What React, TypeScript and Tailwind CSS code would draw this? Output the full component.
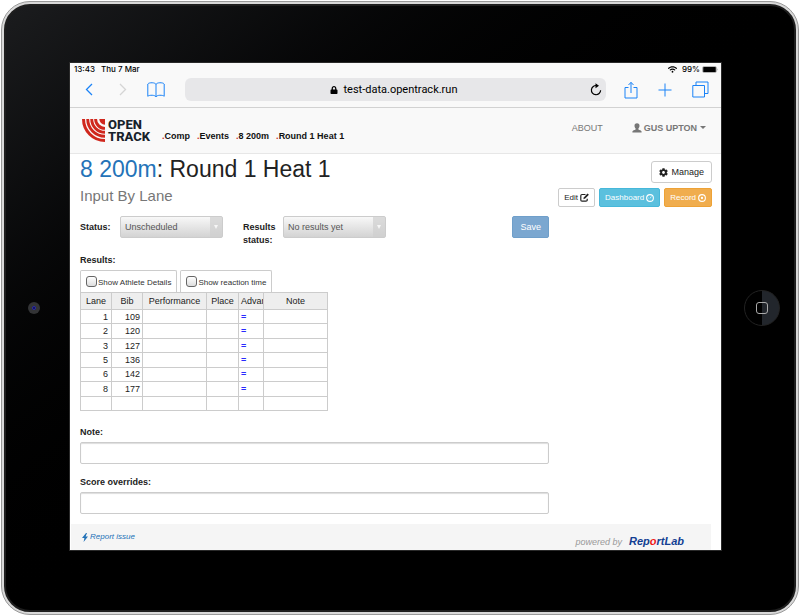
import React, { useState } from "react";
import { FaCog, FaWifi, FaLock } from "react-icons/fa";

const SYSTEM = "font-['Inter',sans-serif]";

function BackIcon({ className }: { className: string }) {
  return (
    <svg viewBox="0 0 8 13" className={className} fill="none" stroke="currentColor" strokeWidth="1.3">
      <path d="M7 1 1.5 6.5 7 12" />
    </svg>
  );
}

function BookIcon() {
  return (
    <svg viewBox="0 0 18 16" className="h-4 w-[18px]" fill="none" stroke="currentColor" strokeWidth="1">
      <path d="M9 2.500C8.500 .3 2 .2 .8 2V14.300C2 12.800 8.500 12.800 9 15 9.500 12.800 16 12.800 17.200 14.300V2C16 .2 9.500 .3 9 2.500ZM9 2.500V15" />
    </svg>
  );
}

function ShareIcon() {
  return (
    <svg viewBox="0 0 14 18" className="h-[18px] w-[14px]" fill="none" stroke="currentColor" strokeWidth="1">
      <path d="M4.500 6.500H1V17H13V6.500H9.500M7 12V1.500M4.500 4 7 1.300 9.500 4" />
    </svg>
  );
}

function PlusIcon() {
  return (
    <svg viewBox="0 0 14 14" className="size-3.5" fill="none" stroke="currentColor" strokeWidth="1">
      <path d="M7 .5V13.500M.5 7H13.500" />
    </svg>
  );
}

function TabsIcon() {
  return (
    <svg viewBox="0 0 17 17" className="size-[17px]" fill="none" stroke="currentColor" strokeWidth="1">
      <path d="M.8 4.500H12.500V16H.8ZM4 4.500V1H16V12.500H12.500" />
    </svg>
  );
}

function ReloadIcon() {
  return (
    <svg viewBox="0 0 12 13" className="h-[13px] w-3" fill="none" stroke="currentColor" strokeWidth="1.2">
      <path d="M10.600 7.200A4.600 4.600 0 1 1 6.800 2.600" />
      <path d="M5.500 .2 9 2.700 5.500 5.200Z" fill="currentColor" stroke="none" />
    </svg>
  );
}

function Battery() {
  return (
    <svg viewBox="0 0 17 7" className="h-[7px] w-[17px]">
      <rect x=".5" y=".5" width="14" height="6" rx="1.500" fill="none" stroke="#999" strokeWidth=".7" />
      <rect x="1.200" y="1" width="12.600" height="5" rx=".6" fill="#000" />
      <path d="M15.500 2.300Q16.700 3.500 15.500 4.700Z" fill="#999" />
    </svg>
  );
}

function TrackMark() {
  return (
    <svg viewBox="0 0 23 23" className="size-[23px]" fill="none" stroke="#d0271d">
      <path d="M1.500 0A21.500 21.500 0 0 0 23 21.500" strokeWidth="3" />
      <path d="M5.700 0A17.300 17.300 0 0 0 23 17.300" strokeWidth="2.900" />
      <path d="M9.700 0A13.300 13.300 0 0 0 23 13.300" strokeWidth="2.900" />
      <path d="M13.600 0A9.400 9.400 0 0 0 23 9.400" strokeWidth="2.900" />
      <path d="M17.300 0A5.700 5.700 0 0 0 23 5.700V0Z" fill="#d0271d" stroke="none" />
    </svg>
  );
}

function PersonIcon() {
  return (
    <svg viewBox="0 0 10 10" className="size-2.5" fill="currentColor">
      <path d="M5 .3C6.700 .3 7.600 1.400 7.500 3 7.400 4.300 6.900 5 6.400 5.600V6.500C7.400 7.100 9.600 7.500 9.600 8.600V9.400H.4V8.600C.4 7.500 2.600 7.100 3.600 6.500V5.600C3.100 5 2.600 4.300 2.500 3 2.400 1.400 3.300 .3 5 .3Z" />
    </svg>
  );
}

function FlashIcon() {
  return (
    <svg viewBox="0 0 8 9" className="h-[9px] w-2" fill="currentColor">
      <path d="M5 0 1 5H3.400L2.600 9 7 3.600H4.600L6 0Z" />
    </svg>
  );
}

function EditIcon() {
  return (
    <svg viewBox="0 0 9 9" className="size-[9px]" fill="none" stroke="currentColor" strokeWidth="1.200">
      <path d="M5.500 1.500H2Q.8 1.500 .8 2.700V7Q.8 8.200 2 8.200H6Q7.200 8.200 7.200 7V5.800" />
      <path d="M3.300 6.200 4 4.300 7.500 .6 8.900 1.800 5.200 5.500Z" fill="currentColor" stroke="none" />
    </svg>
  );
}

function DialIcon() {
  return (
    <svg viewBox="0 0 9 9" className="size-2" fill="none" stroke="currentColor">
      <circle cx="4.500" cy="4.500" r="3.800" strokeWidth="1.200" />
      <path d="M4.500 5 6 2.800M2.500 4.500H3.200" strokeWidth=".8" />
    </svg>
  );
}

function RecordIcon() {
  return (
    <svg viewBox="0 0 9 9" className="size-2" fill="none" stroke="currentColor">
      <circle cx="4.500" cy="4.500" r="3.800" strokeWidth="1.200" />
      <circle cx="4.500" cy="4.500" r="1.300" fill="currentColor" stroke="none" />
    </svg>
  );
}

function StatusBar() {
  return (
    <div className={`flex h-[13px] items-center justify-between pl-1 pr-[2px] text-[8px] leading-[13px] font-medium text-black ${SYSTEM}`}>
      <div className="flex gap-[6px]">
        <span>13:43</span>
        <span>Thu 7 Mar</span>
      </div>
      <div className="flex items-center gap-[5px]">
        <FaWifi className="size-[9px]" />
        <span className="flex items-center gap-[2px]">
          99% <Battery />
        </span>
      </div>
    </div>
  );
}

function BrowserBar() {
  return (
    <div className="flex h-8 items-center border-b border-[#d2d2d2] pr-3 pb-1 pl-[15px] font-['Roboto',sans-serif] text-[#1b83f7]">
      <button aria-label="Back"><BackIcon className="h-[13px] w-2" /></button>
      <button aria-label="Forward" className="ml-[26px] -scale-x-100 text-[#d5d5d5]"><BackIcon className="h-[13px] w-2" /></button>
      <button aria-label="Bookmarks" className="ml-5"><BookIcon /></button>
      <div className="ml-5 flex h-[23px] min-w-0 flex-1 items-center rounded-md bg-[#e7e7e9] pr-1 pl-3 text-black">
        <div className="flex flex-1 items-center justify-center gap-1.5 text-[11px] leading-4">
          <FaLock className="size-2" />
          <span>test-data.opentrack.run</span>
        </div>
        <button aria-label="Reload"><ReloadIcon /></button>
      </div>
      <button aria-label="Share" className="ml-[18px]"><ShareIcon /></button>
      <button aria-label="New tab" className="ml-5"><PlusIcon /></button>
      <button aria-label="Tabs" className="ml-5"><TabsIcon /></button>
    </div>
  );
}

const crumbs = ["Comp", "Events", "8 200m", "Round 1 Heat 1"];

function SiteNav() {
  return (
    <header className="flex h-[46px] items-center justify-between border-b border-[#e7e7e7] bg-[#f9f9f9] pl-3 pr-[15px]">
      <div className="flex items-center">
        <a href="#home" className="flex items-center gap-[3px]">
          <TrackMark />
          <span className="flex flex-col font-['Roboto',sans-serif] text-[13px] leading-3 font-extrabold text-[#17222b]">
            <span>OPEN</span>
            <span>TRACK</span>
          </span>
        </a>
        <nav className="mt-2.5 ml-3 flex gap-[7px] text-[9px] leading-3 font-bold text-[#111]">
          {crumbs.map((c) => (
            <a key={c} href="#crumb">
              <span className="text-[#d0271d]">.</span>
              {c}
            </a>
          ))}
        </nav>
      </div>
      <div className="mb-1.5 flex items-center gap-[29px] text-[9px] leading-3 text-[#777]">
        <a href="#about">ABOUT</a>
        <button className="flex items-center gap-[2px] font-bold">
          <PersonIcon />
          GUS UPTON
          <span className="ml-px border-x-[3px] border-t-[3px] border-x-transparent border-t-[#777]" />
        </button>
      </div>
    </header>
  );
}

function Dropdown({ id, value }: { id: string; value: string }) {
  return (
    <div className="grid h-[22px] w-[103px]">
      <select
        id={id}
        defaultValue={value}
        className="col-start-1 row-start-1 appearance-none rounded-[2px] border border-[#ccc] bg-linear-to-b from-[#f8f8f8] to-[#d3d3d3] pl-1 text-[9px] leading-3 text-[#555]"
      >
        <option>{value}</option>
      </select>
      <span className="pointer-events-none col-start-1 row-start-1 my-px mr-px flex w-3 items-start justify-center justify-self-end bg-[#cfcfcf]/70 pt-2">
        <span className="border-x-[2px] border-t-[4px] border-x-transparent border-t-[#f6f6f6]" />
      </span>
    </div>
  );
}

function Toggle({ label }: { label: string }) {
  return (
    <label className="flex h-[22px] items-center gap-px rounded-t-[2px] border border-b-0 border-[#ccc] px-[5px] text-[8px] leading-3 text-[#333]">
      <input type="checkbox" className="size-[11px] appearance-none rounded-[3px] border border-[#666] bg-linear-to-b from-white to-[#ddd]" />
      <span className="mt-[3px]">{label}</span>
    </label>
  );
}

const results = [
  { lane: "1", bib: "109" },
  { lane: "2", bib: "120" },
  { lane: "3", bib: "127" },
  { lane: "5", bib: "136" },
  { lane: "6", bib: "142" },
  { lane: "8", bib: "177" },
  { lane: "", bib: "" },
];

const columns = [
  { name: "Lane", width: "w-[31px]" },
  { name: "Bib", width: "w-[31px]" },
  { name: "Performance", width: "w-16" },
  { name: "Place", width: "w-8" },
  { name: "Advance", width: "w-[25px]" },
  { name: "Note", width: "w-16" },
];

function ResultsTable() {
  return (
    <table className="h-[119px] w-[247px] table-fixed border-collapse text-[9px] leading-3 text-[#222]">
      <thead>
        <tr className="h-[17px] border-b border-[#999] bg-[#eee]">
          {columns.map((c) => (
            <th
              key={c.name}
              className={`overflow-hidden border-x border-t border-[#ccc] p-0 font-normal whitespace-nowrap ${c.width} ${c.name === "Advance" ? "pl-[2px] text-left" : "text-center"}`}
            >
              {c.name}
            </th>
          ))}
        </tr>
      </thead>
      <tbody>
        {results.map((r) => (
          <tr key={r.lane} className="h-[14px]">
            <td className="border border-[#ccc] py-0 pr-[3px] text-right">{r.lane}</td>
            <td className="border border-[#ccc] py-0 pr-[2px] text-right">{r.bib}</td>
            <td className="border border-[#ccc] p-0" />
            <td className="border border-[#ccc] p-0" />
            <td className="border border-[#ccc] py-0 pl-[2px] font-bold text-[#2a2aff]">{r.lane && "="}</td>
            <td className="border border-[#ccc] p-0" />
          </tr>
        ))}
      </tbody>
    </table>
  );
}

function Field({ id, label }: { id: string; label: string }) {
  const [value, setValue] = useState("");
  return (
    <div className="flex flex-col gap-[3px]">
      <label htmlFor={id} className="font-bold">{label}</label>
      <input
        id={id}
        value={value}
        onChange={(e) => setValue(e.target.value)}
        className="h-[22px] rounded-[2px] border border-[#ccc] px-1 shadow-[inset_0_1px_1px_#ddd]"
      />
    </div>
  );
}

function HeatPage() {
  return (
    <main className="flex-1 bg-white pr-[9px] pl-2.5 text-[9px] leading-[13px] text-[#222]">
      <div className="flex justify-between">
        <div>
          <h1 className="mt-px text-[23px] leading-7">
            <a href="#event" className="text-[#2473b8]">8 200m</a>: Round 1 Heat 1
          </h1>
          <p className="mt-1 text-[15px] leading-[18px] text-[#777]">Input By Lane</p>
        </div>
        <div className="flex flex-col items-end gap-[5px] pt-[7px]">
          <button className="flex h-[22px] items-center gap-[3px] rounded-[3px] border border-[#ccc] px-[7px]">
            <FaCog className="size-[9px]" /> Manage
          </button>
          <div className="flex gap-1 text-[8px]">
            <button className="flex h-[19px] items-center gap-[2px] rounded-[2px] border border-[#ccc] px-[5px]">
              Edit <EditIcon />
            </button>
            <button className="flex h-[19px] items-center gap-[2px] rounded-[2px] border border-[#46b8da] bg-[#5bc0de] px-[5px] text-white">
              Dashboard <DialIcon />
            </button>
            <button className="flex h-[19px] items-center gap-[2px] rounded-[2px] border border-[#eea236] bg-[#f0ad4e] px-[5px] text-white">
              Record <RecordIcon />
            </button>
          </div>
        </div>
      </div>

      <form className="mt-[9px] pr-[163px]" onSubmit={(e) => e.preventDefault()}>
        <div className="flex items-start">
          <label htmlFor="status" className="mt-[5px] w-10 font-bold">Status:</label>
          <Dropdown id="status" value="Unscheduled" />
          <label htmlFor="results-status" className="mt-[5px] ml-5 w-10 font-bold">Results status:</label>
          <Dropdown id="results-status" value="No results yet" />
          <button className="ml-auto h-[22px] rounded-[2px] border border-[#6f9fca] bg-[#7ba7d0] px-[7px] text-white">Save</button>
        </div>
        <h2 className="mt-[7px] font-bold">Results:</h2>
        <div className="mt-[3px] flex gap-[3px]">
          <Toggle label="Show Athlete Details" />
          <Toggle label="Show reaction time" />
        </div>
        <ResultsTable />
        <div className="mt-[15px] flex flex-col gap-3">
          <Field id="note" label="Note:" />
          <Field id="overrides" label="Score overrides:" />
        </div>
      </form>
    </main>
  );
}

function Footer() {
  return (
    <footer className="bg-white pr-2.5 pl-px">
      <div className="flex h-[26px] items-center justify-between bg-[#f5f5f5] pr-[27px] pl-2.5 italic">
        <a href="#issue" className="flex items-center gap-px text-[8px] leading-3 text-[#2473b8]">
          <FlashIcon /> Report issue
        </a>
        <p className="mt-2 flex items-baseline gap-[7px] text-[9px] leading-3 text-[#999]">
          powered by
          <a href="#reportlab" className="text-[11px] font-bold text-[#123f93]">
            Rep<span className="text-[#f01818]">o</span>rtLab
          </a>
        </p>
      </div>
    </footer>
  );
}

export default function App() {
  return (
    <div className="flex min-h-screen bg-white p-px font-['Liberation_Sans',Arial,sans-serif]">
      <div className="flex flex-1 rounded-[29px] border border-[#999] bg-[#d8d8d8] p-[2px]">
        <div className="flex flex-1 items-center rounded-[26px] border-2 border-[#1e1e1e] bg-linear-to-br from-[#1b1c1e] via-black via-55% to-black">
          <div className="flex w-[63px] justify-center">
            <div className="mr-[7px] flex size-3 items-center justify-center rounded-full bg-[#333436]">
              <div className="size-1 rounded-full border border-[#2a2ab0] bg-[#101040]" />
            </div>
          </div>
          <div className="mt-14 mb-[59px] flex min-w-0 flex-1 flex-col self-stretch border border-[#2a2a2a] bg-[#f9f9f9]">
            <StatusBar />
            <BrowserBar />
            <SiteNav />
            <HeatPage />
            <Footer />
          </div>
          <div className="flex w-[72px] justify-center">
            <button
              aria-label="Home"
              className="ml-[7px] flex size-9 items-center justify-center rounded-full border border-[#222] bg-linear-to-r from-black from-50% to-[#22262c] to-50%"
            >
              <span className="size-3 rounded-[3px] border border-[#aaa]" />
            </button>
          </div>
        </div>
      </div>
    </div>
  );
}
